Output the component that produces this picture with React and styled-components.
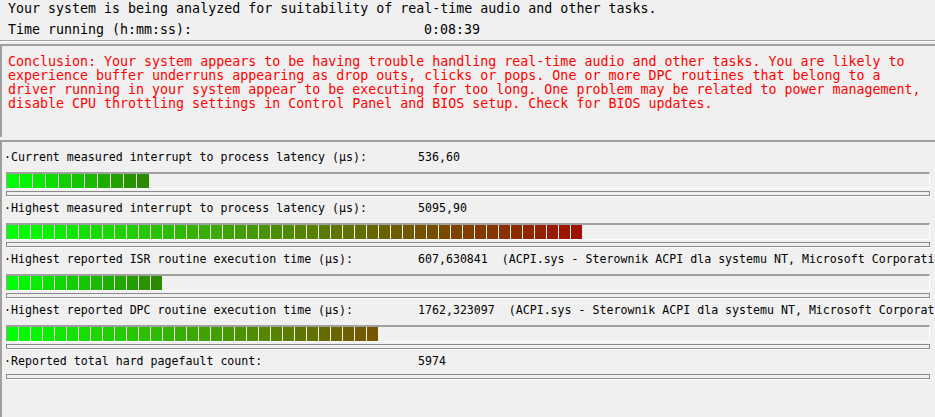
import styled, { createGlobalStyle } from "styled-components";

const Global = createGlobalStyle`
  html, body {
    margin: 0;
    padding: 0;
    background: #f0f0f0;
    overflow: hidden;
  }
  body {
    font-family: "DejaVu Sans Mono", "Liberation Mono", monospace;
  }
`;

const rows = [
  {
    label: "·Current measured interrupt to process latency (µs):",
    value: "536,60",
    blocks: 11,
    chunk: 12,
    end: [42, 138, 0],
  },
  {
    label: "·Highest measured interrupt to process latency (µs):",
    value: "5095,90",
    blocks: 48,
    chunk: 11,
    end: [160, 16, 0],
  },
  {
    label: "·Highest reported ISR routine execution time (µs):",
    value: "607,630841  (ACPI.sys - Sterownik ACPI dla systemu NT, Microsoft Corporation)",
    blocks: 13,
    chunk: 11,
    end: [42, 138, 0],
  },
  {
    label: "·Highest reported DPC routine execution time (µs):",
    value: "1762,323097  (ACPI.sys - Sterownik ACPI dla systemu NT, Microsoft Corporation)",
    blocks: 31,
    chunk: 11,
    end: [118, 84, 0],
  },
  {
    label: "·Reported total hard pagefault count:",
    value: "5974",
  },
];

const mix = (end, t) => {
  const start = [0, 255, 0];
  const c = start.map((s, i) => Math.round(s + (end[i] - s) * t));
  return `rgb(${c[0]}, ${c[1]}, ${c[2]})`;
};

const Window = styled.div`
  width: 935px;
  height: 417px;
  display: flex;
  flex-direction: column;
  background: #f0f0f0;
  overflow: hidden;
`;

const Header = styled.div`
  padding: 1px 0 0 8px;
  height: 39px;
  font-size: 13.3px;
  color: #000;
`;

const HeaderLine = styled.div`
  height: 21px;
  line-height: 16px;
  white-space: nowrap;
  display: flex;
`;

const HeaderKey = styled.span`
  width: 416px;
`;

const Etch = styled.div`
  height: 0;
  border-top: 1px solid #a0a0a0;
  border-bottom: 1px solid #ffffff;
`;

const Conclusion = styled.div`
  margin-top: 2px;
  height: 82px;
  border-top: 2px solid #a0a0a0;
  border-left: 2px solid #a0a0a0;
  padding: 9px 0 0 6px;
  color: #ff0000;
  font-size: 13.3px;
  line-height: 14px;
  white-space: nowrap;
`;

const Metrics = styled.div`
  flex: 1;
  margin-top: 3px;
  border-top: 2px solid #a0a0a0;
  border-left: 2px solid #a0a0a0;
  padding: 8px 0 0 2px;
  font-size: 11.6px;
  color: #000;
  overflow: hidden;
`;

const Row = styled.div`
  display: flex;
  flex-direction: column;
  & + & {
    margin-top: 5px;
  }
`;

const Label = styled.div`
  height: 14px;
  line-height: 14px;
  white-space: pre;
  display: flex;
`;

const Key = styled.span`
  width: 414px;
  flex: none;
`;

const Bar = styled.div`
  margin: 8px 0 0 2px;
  width: 922px;
  height: 14px;
  border-top: 2px solid #a0a0a0;
  border-left: 1px solid #a0a0a0;
  border-bottom: 1px solid #ffffff;
  border-right: 1px solid #ffffff;
  display: flex;
  gap: 1px;
`;

const Block = styled.div`
  flex: none;
  width: ${(p) => p.$w}px;
  height: 14px;
`;

const Track = styled.div`
  margin: ${(p) => (p.$alone ? 6 : 2)}px 0 0 2px;
  width: 922px;
  height: 3px;
  border: 1px solid #8c8c8c;
  box-shadow: 1px 1px 0 #ffffff;
`;

export default function App() {
  return (
    <Window>
      <Global />
      <Header>
        <HeaderLine>
          Your system is being analyzed for suitability of real-time audio and other tasks.
        </HeaderLine>
        <HeaderLine>
          <HeaderKey>Time running (h:mm:ss):</HeaderKey>
          <span>0:08:39</span>
        </HeaderLine>
      </Header>
      <Etch />
      <Conclusion>
        Conclusion: Your system appears to be having trouble handling real-time audio and other tasks. You are likely to
        <br />
        experience buffer underruns appearing as drop outs, clicks or pops. One or more DPC routines that belong to a
        <br />
        driver running in your system appear to be executing for too long. One problem may be related to power management,
        <br />
        disable CPU throttling settings in Control Panel and BIOS setup. Check for BIOS updates.
      </Conclusion>
      <Metrics>
        {rows.map((r, i) => (
          <Row key={i}>
            <Label>
              <Key>{r.label}</Key>
              <span>{r.value}</span>
            </Label>
            {r.blocks ? (
              <Bar>
                {Array.from({ length: r.blocks }).map((_, j) => (
                  <Block
                    key={j}
                    $w={r.chunk}
                    style={{ background: mix(r.end, r.blocks > 1 ? j / (r.blocks - 1) : 0) }}
                  />
                ))}
              </Bar>
            ) : null}
            <Track $alone={!r.blocks} />
          </Row>
        ))}
      </Metrics>
    </Window>
  );
}
